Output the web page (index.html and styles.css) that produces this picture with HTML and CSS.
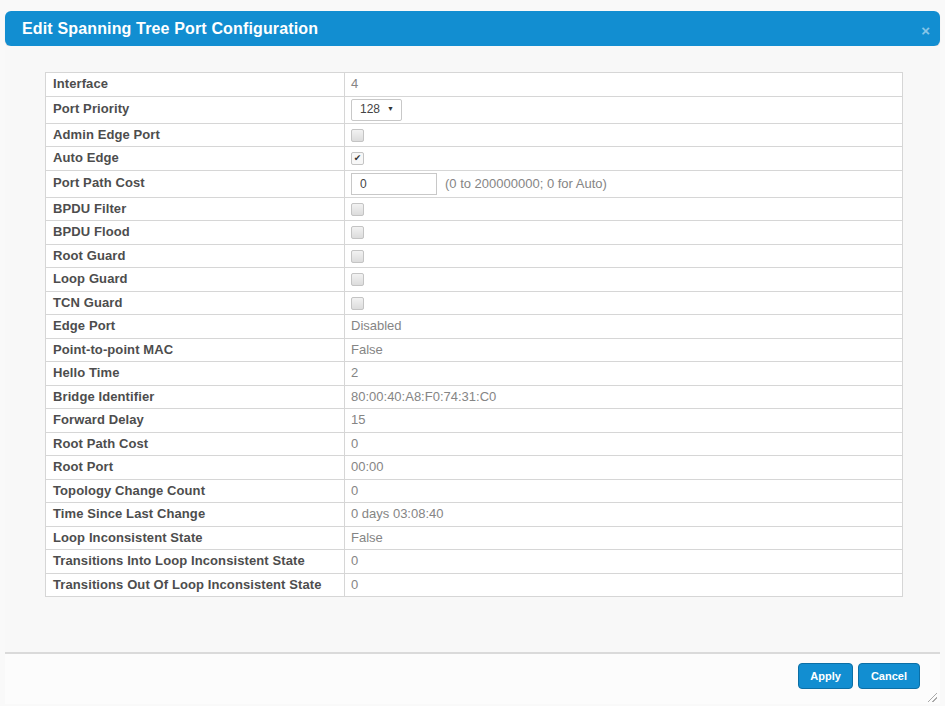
FILE: index.html
```html
<!DOCTYPE html>
<html>
<head>
    <title>Edit Spanning Tree Port Configuration</title>
    <meta charset="utf-8">
    <meta name="viewport" content="width=device-width, initial-scale=1">
    <link rel="stylesheet" href="styles.css">
</head>

<body>
    <div class="modal">
        <div class="modal-header">
            <h3>Edit Spanning Tree Port Configuration</h3>
            <span class="close">&times;</span>
        </div>

        <div class="modal-body">
            <table class="config">
                <tr><td class="label">Interface</td><td>4</td></tr>
                <tr class="tall"><td class="label">Port Priority</td>
                    <td><span class="select">128<span class="caret">&#9660;</span></span></td></tr>
                <tr><td class="label">Admin Edge Port</td><td><span class="check"></span></td></tr>
                <tr><td class="label">Auto Edge</td><td><span class="check on">&#10004;</span></td></tr>
                <tr class="tall"><td class="label">Port Path Cost</td>
                    <td><input class="cost" type="text" value="0"><span class="hint">(0 to 200000000; 0 for Auto)</span></td></tr>
                <tr><td class="label">BPDU Filter</td><td><span class="check"></span></td></tr>
                <tr><td class="label">BPDU Flood</td><td><span class="check"></span></td></tr>
                <tr><td class="label">Root Guard</td><td><span class="check"></span></td></tr>
                <tr><td class="label">Loop Guard</td><td><span class="check"></span></td></tr>
                <tr><td class="label">TCN Guard</td><td><span class="check"></span></td></tr>
                <tr><td class="label">Edge Port</td><td>Disabled</td></tr>
                <tr><td class="label">Point-to-point MAC</td><td>False</td></tr>
                <tr><td class="label">Hello Time</td><td>2</td></tr>
                <tr><td class="label">Bridge Identifier</td><td>80:00:40:A8:F0:74:31:C0</td></tr>
                <tr><td class="label">Forward Delay</td><td>15</td></tr>
                <tr><td class="label">Root Path Cost</td><td>0</td></tr>
                <tr><td class="label">Root Port</td><td>00:00</td></tr>
                <tr><td class="label">Topology Change Count</td><td>0</td></tr>
                <tr><td class="label">Time Since Last Change</td><td>0 days 03:08:40</td></tr>
                <tr><td class="label">Loop Inconsistent State</td><td>False</td></tr>
                <tr><td class="label">Transitions Into Loop Inconsistent State</td><td>0</td></tr>
                <tr><td class="label">Transitions Out Of Loop Inconsistent State</td><td>0</td></tr>
            </table>
        </div>

        <div class="modal-footer">
            <button class="btn">Apply</button>
            <button class="btn">Cancel</button>
            <span class="grip"></span>
        </div>
    </div>
</body>
</html>
```

FILE: styles.css
```css
:root {
    --blue: #128ed1;
    --blueDark: #0b6fa6;
    --line: #d6d6d6;
    --label: #4d4d4d;
    --value: #858585;
}

body {
    margin: 0;
    background-color: #f9f9f9;
    font-family: "Liberation Sans", Arial, sans-serif;
}

.modal {
    margin: 11px 5px 0;
    width: 935px;
}
.modal-header {
    height: 35px;
    display: flex;
    align-items: center;
    justify-content: space-between;
    padding: 0 10px 0 17px;
    background-color: var(--blue);
    border-radius: 6px;
    box-shadow: 0 1px 1px rgba(0, 0, 0, 0.15);
}
.modal-header h3 {
    margin: 0;
    color: #fff;
    font-size: 16px;
    font-weight: bold;
    letter-spacing: 0.15px;
}
.close {
    color: rgba(255, 255, 255, 0.5);
    font-size: 15px;
    font-weight: bold;
    margin-top: 3px;
}

.modal-body {
    padding: 26px 37px 55px 40px;
    background-color: #f8f8f8;
}

.config {
    width: 858px;
    border-collapse: collapse;
    background-color: #fff;
    font-size: 13px;
}
.config td {
    border: 1px solid var(--line);
    padding: 3px 6px;
    line-height: 16.5px;
    color: var(--value);
    vertical-align: middle;
}
.config td.label {
    width: 285px;
    padding-left: 7px;
    color: var(--label);
    font-weight: bold;
    letter-spacing: 0.1px;
}
.config tr.tall td {
    padding-top: 2px;
    padding-bottom: 2px;
}

.select {
    display: inline-flex;
    align-items: center;
    gap: 7px;
    height: 20px;
    padding: 0 7px 0 8px;
    border: 1px solid #c8c8c8;
    border-radius: 2px;
    color: #444;
    font-size: 12px;
    vertical-align: middle;
}
.caret {
    font-size: 7px;
    color: #333;
}

.check {
    display: inline-block;
    width: 11px;
    height: 11px;
    border: 1px solid #c4c4c4;
    border-radius: 2px;
    background: linear-gradient(#f2f2f2, #dcdcdc);
    vertical-align: middle;
    font-family: "DejaVu Sans", sans-serif;
    font-size: 9px;
    line-height: 11px;
    text-align: center;
    color: #333;
}
.check.on {
    background: #f7f7f7;
}

.cost {
    box-sizing: border-box;
    width: 86px;
    height: 22px;
    margin: 0 8px 0 0;
    padding: 0 8px;
    border: 1px solid #c8c8c8;
    font-family: "Liberation Sans", Arial, sans-serif;
    font-size: 12px;
    color: #444;
    vertical-align: middle;
}
.hint {
    font-size: 13px;
    color: var(--value);
    vertical-align: middle;
}

.modal-footer {
    position: relative;
    display: flex;
    justify-content: flex-end;
    gap: 5px;
    height: 52px;
    padding: 9px 20px 0 0;
    box-sizing: border-box;
    border-top: 2px solid #dadada;
    background-color: #fcfcfc;
}
.btn {
    height: 26px;
    padding: 0 11px;
    border: 1px solid var(--blueDark);
    border-radius: 4px;
    background-color: var(--blue);
    color: #fff;
    font-family: "Liberation Sans", Arial, sans-serif;
    font-size: 11px;
    font-weight: bold;
}
.btn + .btn {
    padding: 0 12px;
}
.grip {
    position: absolute;
    right: 3px;
    bottom: 2px;
    width: 9px;
    height: 9px;
    background: linear-gradient(135deg, transparent 45%, #aaa 45%, #aaa 55%, transparent 55%, transparent 70%, #aaa 70%, #aaa 80%, transparent 80%);
}
```
